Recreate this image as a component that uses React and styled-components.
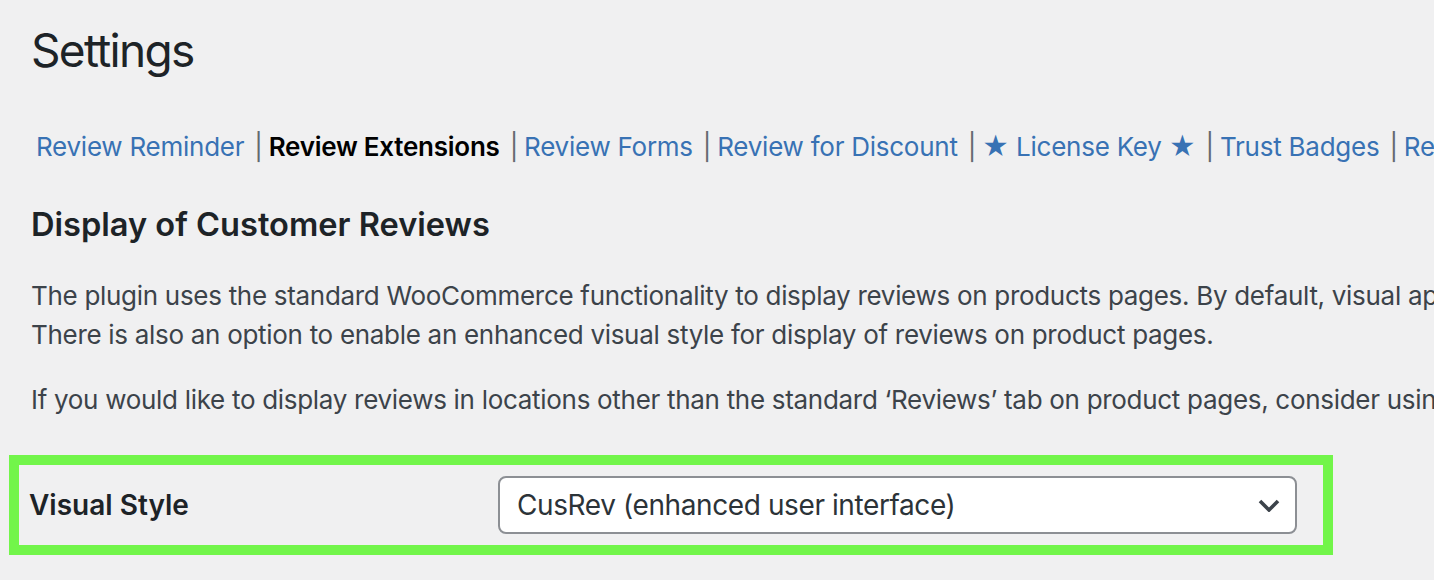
import React from 'react';
import styled, { createGlobalStyle } from 'styled-components';

const GlobalStyle = createGlobalStyle`
  html, body {
    margin: 0;
    padding: 0;
    background: #f0f0f1;
    overflow: hidden;
  }
  body {
    font-family: Inter, "Noto Sans", sans-serif;
    color: #3c434a;
  }
`;

const tabs = [
  { label: 'Review Reminder' },
  { label: 'Review Extensions', current: true },
  { label: 'Review Forms' },
  { label: 'Review for Discount' },
  { label: '★ License Key ★' },
  { label: 'Trust Badges' },
  { label: 'Review Integrations' },
];

const App = () => (
  <>
    <GlobalStyle />
    <Page>
      <Title>Settings</Title>
      <TabList>
        {tabs.map((tab, i) => (
          <TabItem key={tab.label}>
            {i > 0 && <Separator>|</Separator>}
            <Tab current={tab.current}>{tab.label}</Tab>
          </TabItem>
        ))}
      </TabList>
      <SectionTitle>Display of Customer Reviews</SectionTitle>
      <Text>
        The plugin uses the standard WooCommerce functionality to display reviews on products pages. By default, visual appearance of reviews is controlled by the theme.
        <br />
        There is also an option to enable an enhanced visual style for display of reviews on product pages.
      </Text>
      <Text>
        If you would like to display reviews in locations other than the standard ‘Reviews’ tab on product pages, consider using shortcodes or blocks.
      </Text>
      <Highlight>
        <FieldLabel>Visual Style</FieldLabel>
        <SelectBox>
          <span>CusRev (enhanced user interface)</span>
          <Chevron viewBox="0 0 22 13" aria-hidden="true">
            <path d="M2 2 L11 11 L20 2" fill="none" stroke="#3c434a" strokeWidth="3.6" />
          </Chevron>
        </SelectBox>
      </Highlight>
    </Page>
  </>
);

export default App;

const Page = styled.div`
  padding: 20px 0 0 31px;
  white-space: nowrap;
`;

const Title = styled.h1`
  margin: 0;
  font-size: 46px;
  line-height: 60px;
  font-weight: 400;
  letter-spacing: -1.7px;
  color: #1d2327;
`;

const TabList = styled.ul`
  display: flex;
  list-style: none;
  margin: 47px 0 0 5px;
  padding: 0;
  font-size: 26px;
  line-height: 39px;
  letter-spacing: -0.25px;
`;

const TabItem = styled.li`
  display: flex;
  align-items: baseline;
`;

const Separator = styled.span`
  color: #646970;
  margin: 0 6px 0 10px;
`;

const Tab = styled.a`
  color: ${props => (props.current ? '#000' : '#3872b4')};
  font-weight: ${props => (props.current ? 600 : 400)};
  text-decoration: none;
`;

const SectionTitle = styled.h2`
  margin: 38px 0 0;
  font-size: 32.6px;
  line-height: 40px;
  font-weight: 600;
  color: #1d2327;
`;

const Text = styled.p`
  margin: 32px 0 0;
  font-size: 26px;
  line-height: 39px;
  letter-spacing: -0.3px;
  & + & {
    margin-top: 26px;
  }
`;

const Highlight = styled.div`
  display: flex;
  align-items: center;
  box-sizing: border-box;
  width: 1324px;
  height: 100px;
  margin: 36px 0 0 -22px;
  border: 10px solid #72f54a;
  padding: 0 0 0 10px;
`;

const FieldLabel = styled.label`
  width: 469px;
  font-size: 28px;
  font-weight: 600;
  color: #1d2327;
`;

const SelectBox = styled.div`
  display: flex;
  align-items: center;
  justify-content: space-between;
  box-sizing: border-box;
  width: 799px;
  height: 58px;
  padding: 0 15px 0 17px;
  background: #fff;
  border: 2px solid #8c8f94;
  border-radius: 8px;
  font-size: 28px;
  letter-spacing: -0.4px;
  color: #2c3338;
`;

const Chevron = styled.svg`
  width: 22px;
  height: 13px;
`;
